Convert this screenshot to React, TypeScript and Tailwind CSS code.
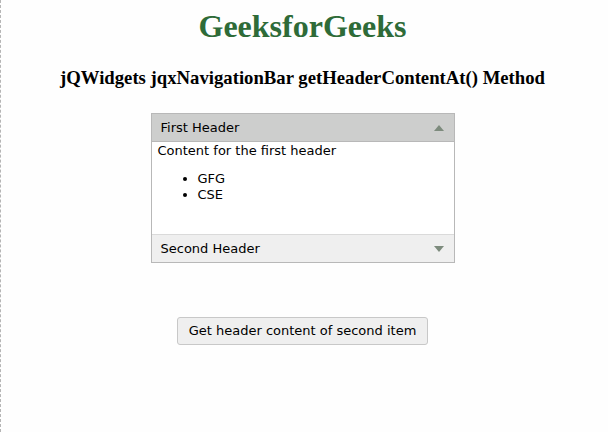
export default function App() {
	return (
		<div className="min-h-[432px] w-[608px] border-l border-dashed border-[#b5b5b5] bg-[#fefefe]">
			<div className="flex w-[603px] flex-col items-center">
				<h1 className="mt-[8px] font-['Liberation_Serif',serif] text-[32px] font-bold leading-[37px] text-[#2e6b38]">
					GeeksforGeeks
				</h1>
				<h3 className="mt-[22px] font-['Liberation_Serif',serif] text-[18.72px] font-bold leading-[22px] text-black">
					jQWidgets jqxNavigationBar getHeaderContentAt() Method
				</h3>
				<div className="mt-[24px] w-[304px] border border-[#b8b8b8] font-['DejaVu_Sans',Verdana,sans-serif] text-[13px] text-black">
					<div className="flex h-[28px] items-center justify-between border-b border-[#b8b8b8] bg-[#cdcecd] pl-[9px] pr-[10px]">
						<span>First Header</span>
						<svg width="10" height="6" viewBox="0 0 10 6">
							<path d="M0 6 L5 0 L10 6 Z" fill="#7d8b7d" />
						</svg>
					</div>
					<div className="h-[92px] bg-white px-[6px] pt-[1px] leading-[16px]">
						<div>Content for the first header</div>
						<ul className="mt-[12px] list-disc pl-[40px]">
							<li>GFG</li>
							<li>CSE</li>
						</ul>
					</div>
					<div className="flex h-[28px] items-center justify-between border-t border-[#dadada] bg-[#efefef] pl-[9px] pr-[10px]">
						<span>Second Header</span>
						<svg width="10" height="6" viewBox="0 0 10 6">
							<path d="M0 0 L10 0 L5 6 Z" fill="#7d8b7d" />
						</svg>
					</div>
				</div>
				<button className="mt-[54px] h-[28px] w-[251px] rounded-[3px] border border-[#c8c8c8] bg-[#efefef] font-['DejaVu_Sans',Verdana,sans-serif] text-[13px] text-black">
					Get header content of second item
				</button>
			</div>
		</div>
	);
}
